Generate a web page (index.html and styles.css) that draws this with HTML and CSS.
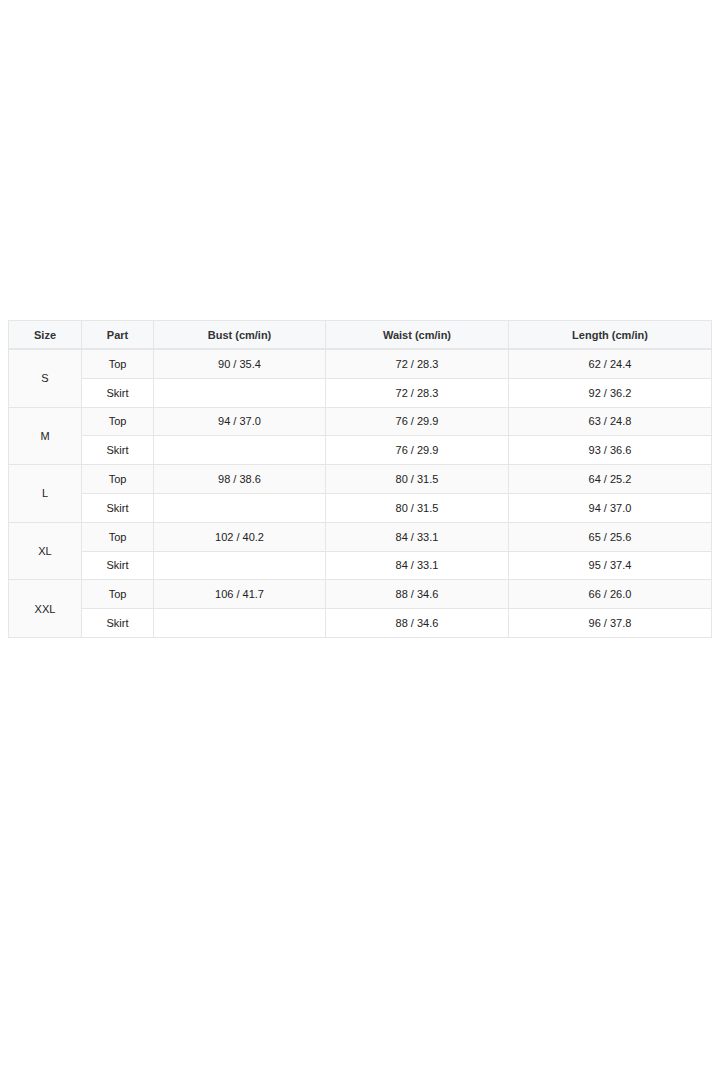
FILE: index.html
```html
<!DOCTYPE html>
<html>
<head>
<meta charset="utf-8">
<link rel="stylesheet" href="styles.css">
</head>
<body>
<div class="wrap">
<table class="size-table">
<colgroup>
<col class="c-size"><col class="c-part"><col class="c-bust"><col class="c-waist"><col class="c-length">
</colgroup>
<thead>
<tr><th>Size</th><th>Part</th><th>Bust (cm/in)</th><th>Waist (cm/in)</th><th>Length (cm/in)</th></tr>
</thead>
<tbody>
<tr><td rowspan="2">S</td><td>Top</td><td>90 / 35.4</td><td>72 / 28.3</td><td>62 / 24.4</td></tr>
<tr><td>Skirt</td><td></td><td>72 / 28.3</td><td>92 / 36.2</td></tr>
<tr><td rowspan="2">M</td><td>Top</td><td>94 / 37.0</td><td>76 / 29.9</td><td>63 / 24.8</td></tr>
<tr><td>Skirt</td><td></td><td>76 / 29.9</td><td>93 / 36.6</td></tr>
<tr><td rowspan="2">L</td><td>Top</td><td>98 / 38.6</td><td>80 / 31.5</td><td>64 / 25.2</td></tr>
<tr><td>Skirt</td><td></td><td>80 / 31.5</td><td>94 / 37.0</td></tr>
<tr><td rowspan="2">XL</td><td>Top</td><td>102 / 40.2</td><td>84 / 33.1</td><td>65 / 25.6</td></tr>
<tr><td>Skirt</td><td></td><td>84 / 33.1</td><td>95 / 37.4</td></tr>
<tr><td rowspan="2">XXL</td><td>Top</td><td>106 / 41.7</td><td>88 / 34.6</td><td>66 / 26.0</td></tr>
<tr><td>Skirt</td><td></td><td>88 / 34.6</td><td>96 / 37.8</td></tr>
</tbody>
</table>
</div>
</body>
</html>
```
FILE: styles.css
```css
html, body {
  margin: 0;
  padding: 0;
  background: #ffffff;
}
body {
  font-family: "Liberation Sans", Arial, sans-serif;
}
.wrap {
  padding: 320px 9px 0 8px;
}
.size-table {
  width: 703px;
  border-collapse: collapse;
  table-layout: fixed;
  font-size: 11px;
  color: #222;
}
.c-size { width: 73px; }
.c-part { width: 72px; }
.c-bust { width: 172px; }
.c-waist { width: 183px; }
.c-length { width: 203px; }
.size-table th,
.size-table td {
  border: 1px solid #e6e6e6;
  text-align: center;
  vertical-align: middle;
  padding: 0 6px;
  height: 27.8px;
  line-height: 12px;
}
.size-table th {
  height: 27px;
  background: #f6f8fa;
  font-weight: bold;
  color: #333;
  border-bottom: 2px solid #e6e6e6;
}
.size-table tbody tr:nth-child(odd) td {
  background: #fafafa;
}
.size-table tbody tr:nth-child(even) td {
  background: #ffffff;
}
```
